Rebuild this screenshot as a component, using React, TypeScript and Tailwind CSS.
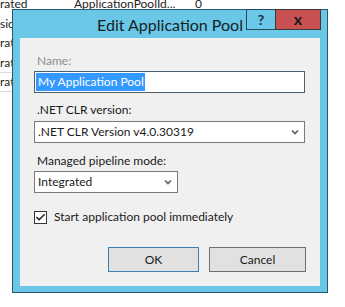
import { Check } from "lucide-react";

const font = { fontFamily: "Lato, 'Noto Sans', sans-serif" };

function Chevron() {
  return (
    <svg width="8" height="6" viewBox="0 0 8 6" className="shrink-0">
      <path d="M1 1.5 L4 4.5 L7 1.5" fill="none" stroke="#606060" strokeWidth="1.7" />
    </svg>
  );
}

function ListRows() {
  const rows = ["sic", "rat", "rat", "rat"];
  return (
    <div className="mt-[-6px] text-[12px] leading-[19.5px] text-[#1e1e1e]">
      <div className="flex h-[19.5px] items-center">
        <span className="w-[74px]">rated</span>
        <span className="w-[121px]">ApplicationPoolId...</span>
        <span>0</span>
      </div>
      {rows.map((r, i) => (
        <div
          key={i}
          className={
            i === 3
              ? "flex h-[19.5px] w-[40px] items-center border border-l-0 border-[#dadada]"
              : "flex h-[19.5px] items-center"
          }
        >
          {r}
        </div>
      ))}
    </div>
  );
}

export default function App() {
  return (
    <div className="relative h-[307px] w-[345px] overflow-hidden bg-white" style={font}>
      <ListRows />

      <div className="absolute left-[12px] top-[9px] flex h-[284px] w-[316px] flex-col border border-[#2a5a70] bg-[#6bc7e7]">
        {/* title bar */}
        <div className="relative flex h-[28px] shrink-0 items-center justify-center">
          <span className="mt-[2px] text-[16px] text-[#151f25]">Edit Application Pool</span>
          <div className="absolute right-[6px] top-[-1px] flex h-[21px]">
            <div className="flex w-[30px] items-center justify-center border border-[#2b4656] bg-[#6bc7e7] text-[14px] font-bold text-[#1b2a33]">
              ?
            </div>
            <div className="ml-[-1px] flex w-[46px] items-center justify-center border border-[#3a3a3a] bg-[#c75050] pb-[2px] text-[16px] font-bold leading-none text-[#1a1a1a]">
              x
            </div>
          </div>
        </div>

        {/* client area */}
        <div className="mx-[7px] mb-[6px] flex flex-1 flex-col bg-[#f0f0f0] px-[14px] text-[12px] leading-[16px] text-[#1a1a1a]">
          <div className="mt-[15px] pl-[3px] text-[#8d8d8d]">Name:</div>
          <div className="mt-[2px] flex h-[22px] w-[271px] items-center border border-[#4b5f6e] bg-white pl-px">
            <span className="bg-[#3399ff] pl-[2px] pr-px leading-[18px] text-white">My Application Pool</span>
          </div>

          <div className="mt-[9px] pl-[3px]">.NET CLR version:</div>
          <div className="mt-[3px] flex h-[22px] w-[271px] items-center justify-between border border-[#7a7a7a] bg-white pl-[3px] pr-[5px]">
            <span>.NET CLR Version v4.0.30319</span>
            <Chevron />
          </div>

          <div className="mt-[10px] pl-[3px]">Managed pipeline mode:</div>
          <div className="mt-[2px] flex h-[22px] w-[144px] items-center justify-between border border-[#7a7a7a] bg-white pl-[3px] pr-[5px]">
            <span>Integrated</span>
            <Chevron />
          </div>

          <div className="mt-[16px] flex h-[16px] items-center">
            <div className="flex h-[13px] w-[13px] items-center justify-center border border-[#333] bg-white">
              <Check size={11} strokeWidth={3.5} className="text-[#222]" />
            </div>
            <span className="ml-[7px]">Start application pool immediately</span>
          </div>

          <div className="mt-[22px] flex justify-end gap-[10px]">
            <button className="h-[25px] w-[91px] border border-[#3c7fb1] bg-[#e1e1e1] text-[12px] text-[#1a1a1a]">
              OK
            </button>
            <button className="h-[25px] w-[97px] border border-[#707070] bg-[#e1e1e1] text-[12px] text-[#1a1a1a]">
              Cancel
            </button>
          </div>
        </div>
      </div>
    </div>
  );
}
